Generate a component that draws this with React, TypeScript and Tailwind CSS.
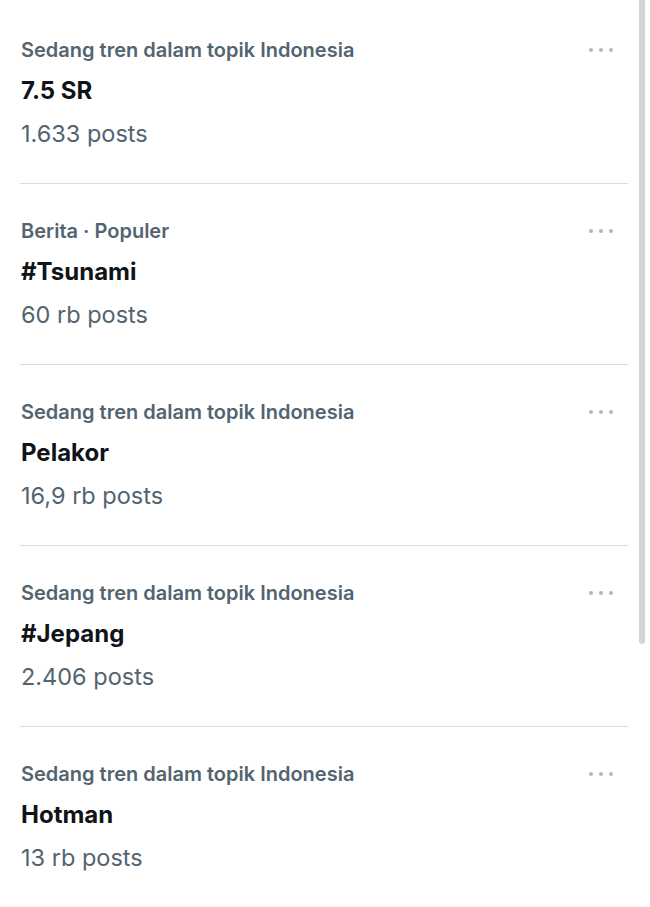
const trends = [
  { category: "Sedang tren dalam topik Indonesia", title: "7.5 SR", posts: "1.633 posts" },
  { category: "Berita · Populer", title: "#Tsunami", posts: "60 rb posts" },
  { category: "Sedang tren dalam topik Indonesia", title: "Pelakor", posts: "16,9 rb posts" },
  { category: "Sedang tren dalam topik Indonesia", title: "#Jepang", posts: "2.406 posts" },
  { category: "Sedang tren dalam topik Indonesia", title: "Hotman", posts: "13 rb posts" },
];

function MoreDots() {
  return (
    <div className="flex items-start gap-[6px] pt-[18px]">
      <span className="w-[4px] h-[4px] rounded-full bg-[#b0b8c0]" />
      <span className="w-[4px] h-[4px] rounded-full bg-[#b0b8c0]" />
      <span className="w-[4px] h-[4px] rounded-full bg-[#b0b8c0]" />
    </div>
  );
}

export default function App() {
  return (
    <div
      className="relative w-[650px] h-[907px] overflow-hidden bg-white"
      style={{ fontFamily: "Inter, 'Noto Sans', sans-serif" }}
    >
      <div className="ml-[20px] w-[608px] pt-[3px]">
        {trends.map((t, i) => (
          <div
            key={i}
            className={
              "flex items-start justify-between pr-[15px] pl-[1px] pt-[27px] pb-[28px] h-[181px] " +
              (i < trends.length - 1 ? "border-b border-[#dcdcdc]" : "")
            }
          >
            <div className="flex flex-col">
              <p className="text-[20px] leading-[40px] font-semibold text-[#536471]">
                {t.category}
              </p>
              <p className="text-[24px] leading-[42px] font-bold text-[#0f1419]">
                {t.title}
              </p>
              <p className="text-[23.5px] leading-[44px] text-[#536471]">{t.posts}</p>
            </div>
            <MoreDots />
          </div>
        ))}
      </div>

      {/* scrollbar */}
      <div className="absolute top-0 left-[639px] w-[6px] h-[644px] rounded-b-full bg-[#d4d4d4]" />
    </div>
  );
}
